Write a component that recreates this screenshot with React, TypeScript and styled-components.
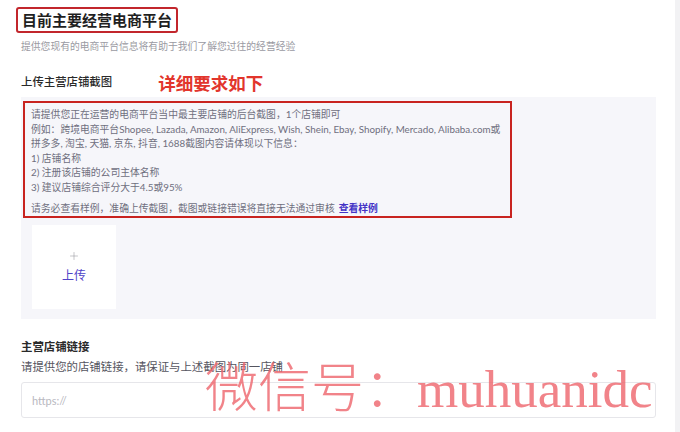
import React from "react";
import styled, { createGlobalStyle } from "styled-components";
import { Plus as PlusIcon } from "lucide-react";

const Global = createGlobalStyle`
  html, body { margin: 0; padding: 0; background: #ffffff; }
  body { font-family: "Lato", "Noto Sans CJK SC", sans-serif; }
`;

const Shell = styled.div`
  display: flex;
  width: 680px;
  height: 432px;
  overflow: hidden;
  position: relative;
`;

const Main = styled.div`
  flex: 1;
  padding-left: 21px;
  padding-right: 19px;
`;

const ScrollStrip = styled.div`
  width: 5px;
  background: #f2f2f4;
`;

const TitleBox = styled.div`
  display: inline-block;
  margin: 7px 0 0 -5px;
  padding: 0 4px;
  border: 2px solid #c2262c;
  border-radius: 3px;
  font-family: "Noto Sans CJK SC", sans-serif;
  font-weight: 700;
  font-size: 15px;
  line-height: 22px;
  color: #1f1f1f;
`;

const Subtitle = styled.div`
  margin-top: 6px;
  font-family: "Noto Sans CJK SC", sans-serif;
  font-size: 9.8px;
  line-height: 14px;
  color: #9a9aa2;
`;

const LabelRow = styled.div`
  display: flex;
  align-items: center;
  height: 24px;
  margin-top: 16px;
  gap: 46px;
`;

const Label = styled.div<{ $bold?: boolean }>`
  font-family: "Noto Sans CJK SC", sans-serif;
  font-size: 11.4px;
  font-weight: ${(p) => (p.$bold ? 700 : 500)};
  line-height: 16px;
  color: #2a2a2a;
`;

const RedNote = styled.div`
  font-family: "Liberation Serif", "Noto Sans CJK SC", serif;
  font-weight: 700;
  font-size: 17.5px;
  color: #e2352c;
  margin-top: 3px;
`;

const Panel = styled.div`
  margin-top: 4px;
  width: 635px;
  height: 222px;
  box-sizing: border-box;
  background: #f6f6fa;
  padding: 4px 0 0 2px;
`;

const Notice = styled.div`
  width: 489px;
  box-sizing: border-box;
  border: 2px solid #c8231f;
  padding: 4px 0 1px 6px;
  font-family: "Lato", "Noto Sans CJK SC", sans-serif;
  font-size: 9.8px;
  line-height: 14.5px;
  color: #6f6f7e;
`;

const Line = styled.div<{ $gap?: number }>`
  white-space: nowrap;
  margin-top: ${(p) => p.$gap ?? 0}px;
`;

const Link = styled.span`
  color: #4434c6;
  font-weight: 700;
  margin-left: 4px;
`;

const UploadCard = styled.div`
  margin: 7px 0 0 9px;
  width: 84px;
  height: 84px;
  background: #ffffff;
  display: flex;
  flex-direction: column;
  align-items: center;
  padding-top: 25px;
  box-sizing: border-box;
  color: #8a8a92;
`;

const UploadText = styled.div`
  margin-top: 5px;
  font-family: "Noto Sans CJK SC", sans-serif;
  font-size: 12px;
  line-height: 16px;
  color: #4f43c8;
`;

const Section = styled.div`
  margin-top: 19px;
`;

const Hint = styled.div`
  margin-top: 4px;
  font-family: "Noto Sans CJK SC", sans-serif;
  font-size: 11.4px;
  line-height: 16px;
  color: #555560;
`;

const Input = styled.input`
  display: block;
  margin-top: 8px;
  width: 635px;
  height: 36px;
  box-sizing: border-box;
  border: 1px solid #e6e6ea;
  border-radius: 3px;
  padding: 0 10px;
  font-family: "Lato", sans-serif;
  font-size: 11px;
  color: #333;
  outline: none;
  &::placeholder { color: #b8b8c0; }
`;

const Watermark = styled.div`
  position: absolute;
  left: 205px;
  top: 359px;
  font-family: "Liberation Serif", "Noto Sans CJK SC", serif;
  font-size: 53px;
  line-height: 60px;
  font-weight: 300;
  color: rgba(238, 100, 108, 0.8);
  white-space: nowrap;
  pointer-events: none;
`;

export default function App() {
  return (
    <Shell>
      <Global />
      <Main>
        <TitleBox>目前主要经营电商平台</TitleBox>
        <Subtitle>提供您现有的电商平台信息将有助于我们了解您过往的经营经验</Subtitle>
        <LabelRow>
          <Label>上传主营店铺截图</Label>
          <RedNote>详细要求如下</RedNote>
        </LabelRow>
        <Panel>
          <Notice>
            <Line>请提供您正在运营的电商平台当中最主要店铺的后台截图，1个店铺即可</Line>
            <Line>例如：跨境电商平台Shopee, Lazada, Amazon, AliExpress, Wish, Shein, Ebay, Shopify, Mercado, Alibaba.com或</Line>
            <Line>拼多多, 淘宝, 天猫, 京东, 抖音, 1688截图内容请体现以下信息：</Line>
            <Line>1) 店铺名称</Line>
            <Line>2) 注册该店铺的公司主体名称</Line>
            <Line>3) 建议店铺综合评分大于4.5或95%</Line>
            <Line $gap={6.5}>
              请务必查看样例，准确上传截图，截图或链接错误将直接无法通过审核<Link>查看样例</Link>
            </Line>
          </Notice>
          <UploadCard>
            <PlusIcon size={12} strokeWidth={1} />
            <UploadText>上传</UploadText>
          </UploadCard>
        </Panel>
        <Section>
          <Label $bold>主营店铺链接</Label>
          <Hint>请提供您的店铺链接，请保证与上述截图为同一店铺</Hint>
          <Input placeholder="https://" />
        </Section>
      </Main>
      <ScrollStrip />
      <Watermark>微信号：muhuanidc</Watermark>
    </Shell>
  );
}
